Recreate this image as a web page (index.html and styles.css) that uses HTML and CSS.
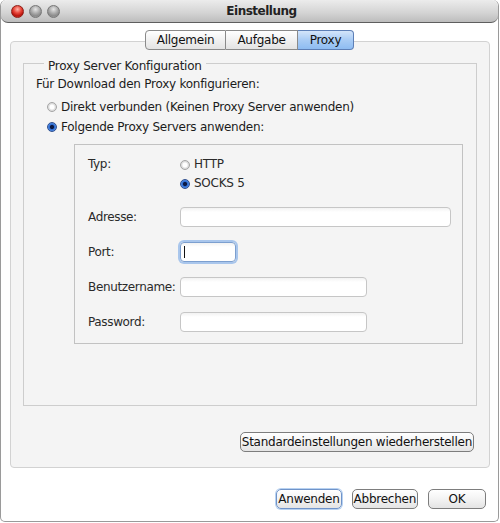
FILE: index.html
```html
<!DOCTYPE html>
<html lang="de">
<head>
    <meta charset="UTF-8">
    <meta name="viewport" content="width=device-width, initial-scale=1.0">
    <title>Einstellung</title>
    <link rel="stylesheet" href="styles.css">
</head>
<body>
    <div class="window">
        <div class="titlebar">
            <div class="lights">
                <span class="light red"></span>
                <span class="light"></span>
                <span class="light"></span>
            </div>
            <div class="title">Einstellung</div>
            <div></div>
        </div>

        <div class="tabs">
            <span class="tab">Allgemein</span><span class="tab">Aufgabe</span><span class="tab active">Proxy</span>
        </div>

        <div class="panel">
            <fieldset class="group">
                <legend>Proxy Server Konfiguration</legend>
                <div class="intro">Für Download den Proxy konfigurieren:</div>
                <div class="opt first"><span class="radio"></span>Direkt verbunden (Keinen Proxy Server anwenden)</div>
                <div class="opt"><span class="radio on"></span>Folgende Proxy Servers anwenden:</div>

                <div class="proxy-box">
                    <div class="type-row">
                        <span class="lbl">Typ:</span>
                        <div class="types">
                            <div class="type"><span class="radio"></span>HTTP</div>
                            <div class="type"><span class="radio on"></span>SOCKS 5</div>
                        </div>
                    </div>
                    <div class="field">
                        <span class="lbl">Adresse:</span>
                        <div class="input wide"></div>
                    </div>
                    <div class="field">
                        <span class="lbl">Port:</span>
                        <div class="input port focus"><span class="caret"></span></div>
                    </div>
                    <div class="field">
                        <span class="lbl">Benutzername:</span>
                        <div class="input mid"></div>
                    </div>
                    <div class="field">
                        <span class="lbl">Password:</span>
                        <div class="input mid"></div>
                    </div>
                </div>
            </fieldset>

            <div class="panel-foot">
                <button type="button" class="btn">Standardeinstellungen wiederherstellen</button>
            </div>
        </div>

        <div class="actions">
            <button type="button" class="btn default">Anwenden</button>
            <button type="button" class="btn">Abbrechen</button>
            <button type="button" class="btn ok">OK</button>
        </div>
    </div>
</body>
</html>
```

FILE: styles.css
```css
body {
    margin: 0;
    background: #fff;
    font-family: "DejaVu Sans", "Liberation Sans", sans-serif;
    font-size: 12px;
    letter-spacing: -0.25px;
    color: #1c1c1c;
}

.window {
    width: 499px;
    height: 522px;
    box-sizing: border-box;
    border: 1px solid #9a9a9a;
    border-top: none;
    border-radius: 6px 6px 5px 5px;
    background: #fff;
    overflow: hidden;
}

.titlebar {
    height: 22px;
    display: grid;
    grid-template-columns: 1fr auto 1fr;
    align-items: center;
    background: linear-gradient(#ececec, #d3d3d3 60%, #bdbdbd);
    border-bottom: 1px solid #5e5e5e;
    border-radius: 6px 6px 7px 7px;
}

.lights {
    display: flex;
    gap: 5px;
    padding-left: 10px;
}

.light {
    width: 13px;
    height: 13px;
    box-sizing: border-box;
    border-radius: 50%;
    border: 1px solid #777;
    background: radial-gradient(circle at 50% 30%, #e6e6e6 0, #a9a9a9 45%, #8a8a8a 70%, #b5b5b5 100%);
}

.light.red {
    border-color: #8e1e16;
    background: radial-gradient(circle at 50% 30%, #ffb4a8 0, #e8463a 40%, #b8150d 70%, #e05a48 100%);
}

.title {
    font-weight: bold;
    letter-spacing: -0.5px;
    padding-left: 24px;
    color: #222;
}

.tabs {
    display: flex;
    justify-content: center;
    margin-top: 7px;
    margin-bottom: -9px;
    position: relative;
    z-index: 1;
}

.tab {
    height: 20px;
    line-height: 18px;
    box-sizing: border-box;
    padding: 0 11px;
    border: 1px solid #8a8a8a;
    border-left: none;
    background: linear-gradient(#ffffff, #f1f1f1 50%, #e3e3e3);
    color: #111;
}

.tab:first-child {
    border-left: 1px solid #8a8a8a;
    border-radius: 4px 0 0 4px;
}

.tab:last-child {
    border-radius: 0 4px 4px 0;
}

.tab.active {
    padding: 0 12px;
    border-color: #5d7fb6;
    background: linear-gradient(#d4e5fa, #a9ccf5 50%, #8ebcf2);
}

.panel {
    width: 480px;
    height: 427px;
    box-sizing: border-box;
    margin-left: 9px;
    border: 1px solid #d2d2d2;
    border-radius: 4px;
    background: #f4f4f4;
    padding-top: 10px;
}

.group {
    margin: 0 12px;
    padding: 0 12px 61px;
    border: 1px solid #cdcdcd;
    min-width: 0;
}

.group legend {
    margin-left: 8px;
    padding: 6px 4px 0;
    line-height: 16px;
    color: #222;
}

.intro {
    line-height: 18px;
    padding-top: 1px;
}

.opt {
    display: flex;
    align-items: center;
    line-height: 20px;
    padding-left: 11px;
}

.opt.first {
    margin-top: 4px;
}

.radio {
    width: 10px;
    height: 10px;
    box-sizing: border-box;
    border-radius: 50%;
    border: 1px solid #a5a5a5;
    background: radial-gradient(circle, #fff 0 2px, #e2e2e2 3px, #cfcfcf 100%);
    margin-right: 4px;
    flex: none;
}

.radio.on {
    border-color: #2f4f8f;
    background: radial-gradient(circle, #0c1a45 0 1.6px, #2f6fd6 2.6px, #7fb0f2 100%);
}

.proxy-box {
    margin: 7px 0 0 38px;
    width: 389px;
    height: 200px;
    box-sizing: border-box;
    border: 1px solid #c2c2c2;
    padding: 10px 0 0 13px;
    color: #2a2a2a;
}

.lbl {
    width: 92px;
    flex: none;
    letter-spacing: -0.35px;
}

.type-row {
    display: flex;
    line-height: 19px;
    margin-bottom: 14px;
}

.type {
    display: flex;
    align-items: center;
}

.field {
    display: flex;
    align-items: center;
    height: 20px;
}

.field + .field {
    margin-top: 15px;
}

.input {
    height: 20px;
    box-sizing: border-box;
    border: 1px solid #c6c6c6;
    border-radius: 4px;
    background: linear-gradient(#f2f2f2, #fff 4px);
}

.input.wide {
    width: 271px;
}

.input.mid {
    width: 187px;
}

.input.port {
    width: 56px;
    display: flex;
    align-items: center;
    padding-left: 3px;
}

.input.focus {
    border-color: #7c9fcf;
    box-shadow: 0 0 0 2px #a9c6ec;
}

.caret {
    width: 1px;
    height: 12px;
    background: #111;
}

.panel-foot {
    display: flex;
    justify-content: flex-end;
    padding-right: 15px;
    margin-top: 26px;
}

.btn {
    height: 20px;
    padding: 0 1px;
    font-family: "DejaVu Sans", "Liberation Sans", sans-serif;
    font-size: 12px;
    letter-spacing: -0.25px;
    line-height: 18px;
    color: #111;
    border: 1px solid #7d7d7d;
    border-radius: 5px;
    background: linear-gradient(#ffffff, #f3f3f3 50%, #e4e4e4);
}

.actions {
    display: flex;
    justify-content: flex-end;
    gap: 10px;
    margin-top: 21px;
    padding-right: 12px;
}

.btn.default {
    border-color: #6f93c9;
    box-shadow: 0 0 0 1px #b8d2f1;
}

.btn.ok {
    width: 58px;
}
```
